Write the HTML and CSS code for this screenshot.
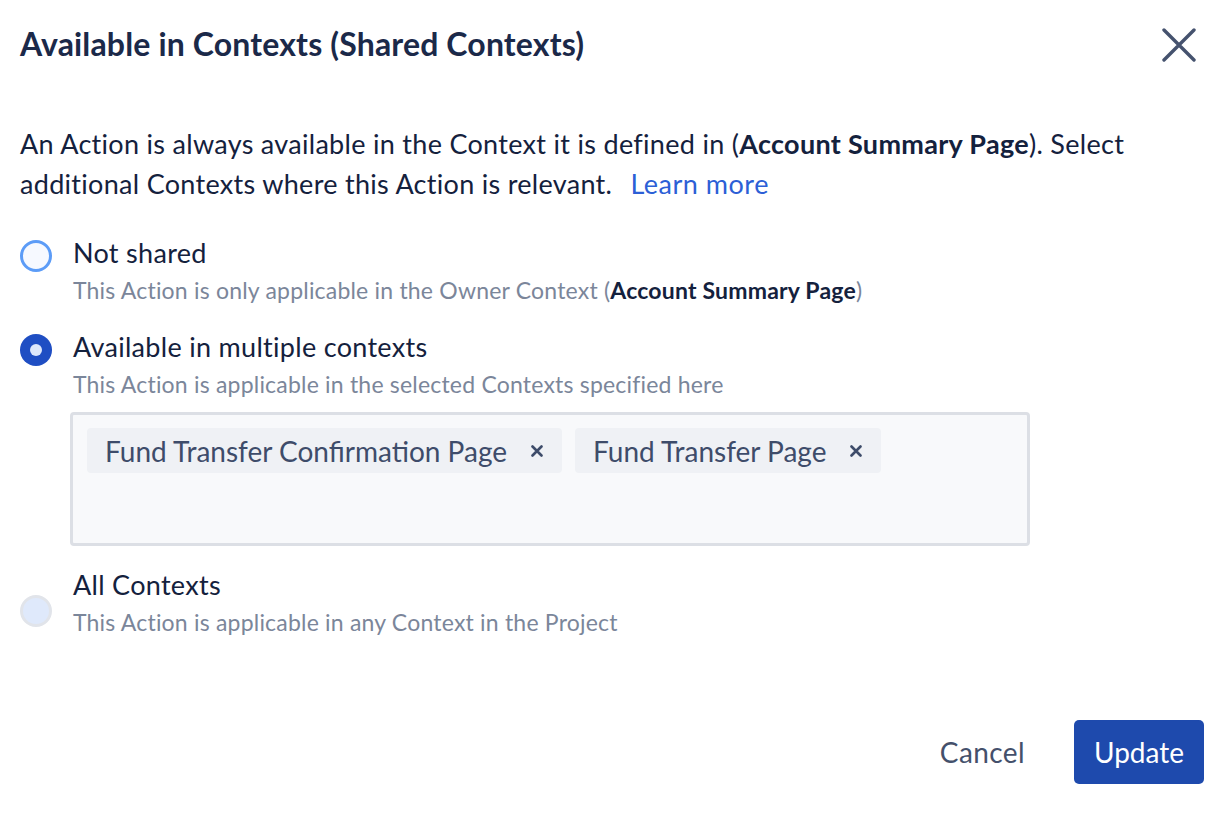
FILE: index.html
```html
<!DOCTYPE html>
<html lang="en">
<head>
<meta charset="utf-8">
<title>Available in Contexts</title>
<link rel="stylesheet" href="styles.css">
</head>
<body>
<div class="dialog">
  <header class="header">
    <h1 class="title">Available in Contexts (Shared Contexts)</h1>
    <button class="close" aria-label="Close">
      <svg width="34" height="34" viewBox="0 0 34 34"><path d="M2 2 L32 32 M32 2 L2 32" stroke="#45526e" stroke-width="3.4" stroke-linecap="round" fill="none"/></svg>
    </button>
  </header>
  <p class="intro">An Action is always available in the Context it is defined in (<b>Account Summary Page</b>). Select additional Contexts where this Action is relevant. <a class="link" href="#">Learn more</a></p>

  <div class="options">
    <div class="option">
      <span class="radio radio-empty"></span>
      <div class="option-body">
        <div class="label">Not shared</div>
        <div class="desc">This Action is only applicable in the Owner Context (<b>Account Summary Page</b>)</div>
      </div>
    </div>
    <div class="option">
      <span class="radio radio-checked"></span>
      <div class="option-body">
        <div class="label">Available in multiple contexts</div>
        <div class="desc">This Action is applicable in the selected Contexts specified here</div>
        <div class="tagbox">
          <span class="tag">Fund Transfer Confirmation Page <svg class="tag-x" width="12" height="12" viewBox="0 0 12 12"><path d="M1.5 1.5 L10.5 10.5 M10.5 1.5 L1.5 10.5" stroke="#3e4c6a" stroke-width="2.6" stroke-linecap="round"/></svg></span>
          <span class="tag">Fund Transfer Page <svg class="tag-x" width="12" height="12" viewBox="0 0 12 12"><path d="M1.5 1.5 L10.5 10.5 M10.5 1.5 L1.5 10.5" stroke="#3e4c6a" stroke-width="2.6" stroke-linecap="round"/></svg></span>
        </div>
      </div>
    </div>
    <div class="option">
      <span class="radio radio-disabled"></span>
      <div class="option-body">
        <div class="label">All Contexts</div>
        <div class="desc">This Action is applicable in any Context in the Project</div>
      </div>
    </div>
  </div>

  <footer class="footer">
    <button class="btn-cancel">Cancel</button>
    <button class="btn-update">Update</button>
  </footer>
</div>
</body>
</html>
```

FILE: styles.css
```css
html, body {
  margin: 0;
  padding: 0;
  background: #ffffff;
}
body {
  font-family: Lato, "Open Sans", sans-serif;
  color: #14213d;
}
.dialog {
  padding: 26px 28px 0 20px;
}
.header {
  display: flex;
  justify-content: space-between;
  align-items: flex-start;
  height: 36px;
}
.title {
  margin: 0;
  font-size: 32px;
  line-height: 36px;
  letter-spacing: 0.15px;
  font-weight: 700;
  color: #1b2949;
}
.close {
  border: 0;
  background: none;
  padding: 0;
  margin-top: 2px;
  margin-right: 8px;
  width: 34px;
  height: 34px;
  cursor: pointer;
}
.close svg {
  display: block;
}
.intro {
  margin: 62px 0 0 0;
  font-size: 27px;
  line-height: 40px;
  letter-spacing: 0.3px;
  color: #14213d;
  max-width: 1150px;
}
.intro b, .desc b {
  font-weight: 700;
  color: #14213d;
}
.link {
  color: #2c5fd6;
  text-decoration: none;
  margin-left: 11px;
  letter-spacing: 0.5px;
}
.options {
  margin-top: 30px;
  display: flex;
  flex-direction: column;
  gap: 20px;
}
.option {
  display: flex;
  align-items: flex-start;
  gap: 21px;
}
.radio {
  flex: none;
  box-sizing: border-box;
  width: 32px;
  height: 32px;
  border-radius: 50%;
  margin-top: 6px;
  display: flex;
  align-items: center;
  justify-content: center;
}
.radio-empty {
  border: 3px solid #5c9cf7;
  background: #f6f9ff;
}
.radio-checked {
  background: #1f4ec3;
}
.radio-checked::after {
  content: "";
  width: 12px;
  height: 12px;
  border-radius: 50%;
  background: #dde7fb;
}
.radio-disabled {
  border: 3px solid #e1e4ea;
  background: #dfe9fb;
  margin-top: 29px;
}
.option-body {
  flex: 1;
  min-width: 0;
}
.label {
  font-size: 27px;
  line-height: 38px;
  letter-spacing: 0.3px;
  color: #14213d;
}
.desc {
  font-size: 23px;
  line-height: 36px;
  letter-spacing: 0.2px;
  color: #7b869a;
}
.tagbox {
  box-sizing: border-box;
  margin-top: 10px;
  width: 960px;
  height: 134px;
  margin-left: -3px;
  border: 3px solid #dcdfe5;
  border-radius: 4px;
  background: #f8f9fb;
  padding: 13px 14px;
  display: flex;
  align-items: flex-start;
  gap: 13px;
}
.tag {
  display: inline-flex;
  align-items: center;
  height: 45px;
  padding: 0 19px 0 18px;
  border-radius: 4px;
  background: #eff1f5;
  font-size: 28px;
  color: #3e4c6a;
}
.tag-x {
  margin-left: 24px;
  flex: none;
}
.footer {
  display: flex;
  justify-content: flex-end;
  align-items: center;
  gap: 49px;
  margin-top: 80px;
}
.btn-cancel {
  border: 0;
  background: none;
  padding: 0;
  font-family: Lato, "Open Sans", sans-serif;
  font-size: 28px;
  letter-spacing: 0.4px;
  color: #44506b;
}
.btn-update {
  border: 0;
  border-radius: 5px;
  background: #1e4aad;
  color: #ffffff;
  font-family: Lato, "Open Sans", sans-serif;
  font-size: 28px;
  width: 130px;
  height: 64px;
  padding: 0;
}
```
